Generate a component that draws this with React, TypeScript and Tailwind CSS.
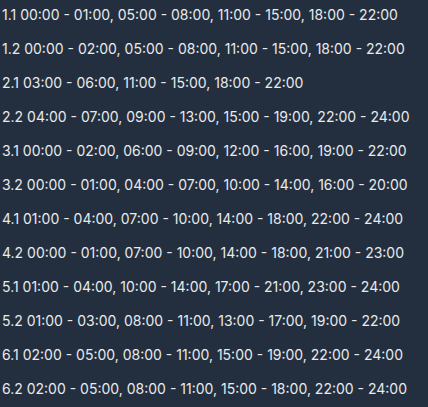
import React from 'react';

const schedules: { id: string; ranges: string[] }[] = [
  { id: '1.1', ranges: ['00:00 - 01:00', '05:00 - 08:00', '11:00 - 15:00', '18:00 - 22:00'] },
  { id: '1.2', ranges: ['00:00 - 02:00', '05:00 - 08:00', '11:00 - 15:00', '18:00 - 22:00'] },
  { id: '2.1', ranges: ['03:00 - 06:00', '11:00 - 15:00', '18:00 - 22:00'] },
  { id: '2.2', ranges: ['04:00 - 07:00', '09:00 - 13:00', '15:00 - 19:00', '22:00 - 24:00'] },
  { id: '3.1', ranges: ['00:00 - 02:00', '06:00 - 09:00', '12:00 - 16:00', '19:00 - 22:00'] },
  { id: '3.2', ranges: ['00:00 - 01:00', '04:00 - 07:00', '10:00 - 14:00', '16:00 - 20:00'] },
  { id: '4.1', ranges: ['01:00 - 04:00', '07:00 - 10:00', '14:00 - 18:00', '22:00 - 24:00'] },
  { id: '4.2', ranges: ['00:00 - 01:00', '07:00 - 10:00', '14:00 - 18:00', '21:00 - 23:00'] },
  { id: '5.1', ranges: ['01:00 - 04:00', '10:00 - 14:00', '17:00 - 21:00', '23:00 - 24:00'] },
  { id: '5.2', ranges: ['01:00 - 03:00', '08:00 - 11:00', '13:00 - 17:00', '19:00 - 22:00'] },
  { id: '6.1', ranges: ['02:00 - 05:00', '08:00 - 11:00', '15:00 - 19:00', '22:00 - 24:00'] },
  { id: '6.2', ranges: ['02:00 - 05:00', '08:00 - 11:00', '15:00 - 18:00', '22:00 - 24:00'] },
];

export default function App() {
  return (
    <div
      className="min-h-screen bg-[#232f3e] text-[#e8eaed] pl-[2px] pt-[5px] flex flex-col gap-[14px]"
      style={{ fontFamily: 'Inter, "Noto Sans", sans-serif' }}
    >
      {schedules.map((s) => (
        <p key={s.id} className="text-sm leading-5 whitespace-nowrap">
          {s.id} {s.ranges.join(', ')}
        </p>
      ))}
    </div>
  );
}
